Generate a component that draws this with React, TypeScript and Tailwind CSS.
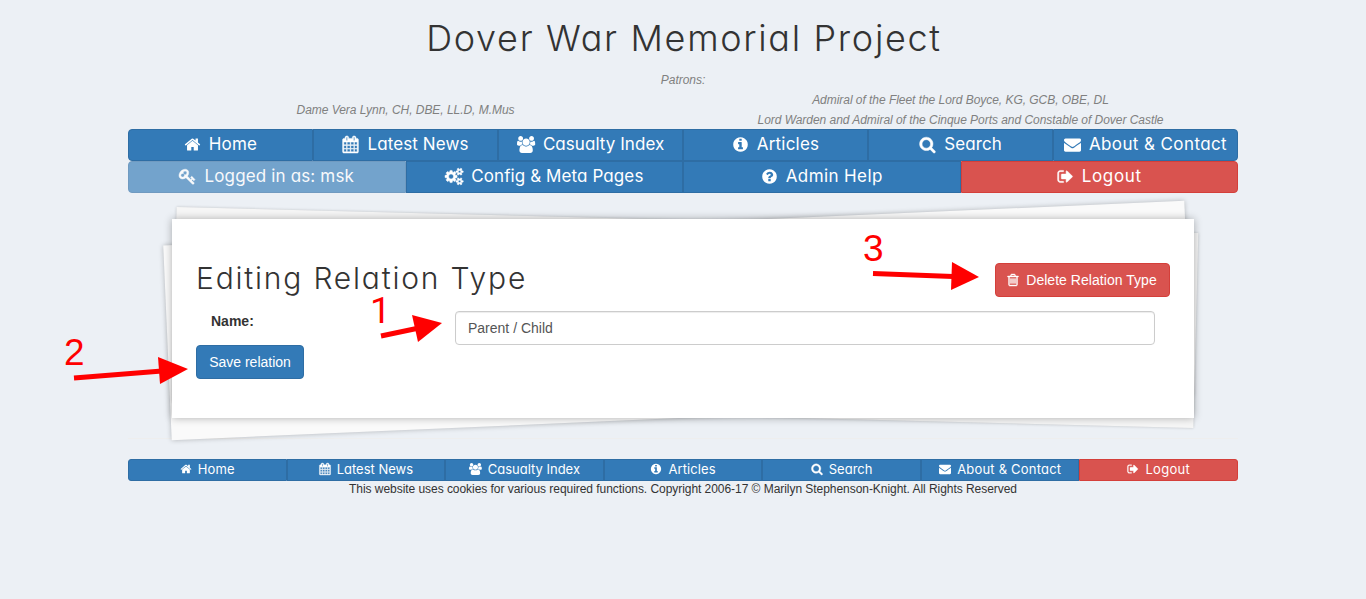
import React from 'react';

const paths = {
  home: 'M1472 992v480q0 26-19 45t-45 19h-384v-384h-256v384h-384q-26 0-45-19t-19-45v-480q0-1 .5-3t.5-3l575-474 575 474q1 2 1 6zm223-69l-62 74q-8 9-21 11h-3q-13 0-21-7l-692-577-692 577q-12 8-24 7-13-2-21-11l-62-74q-8-10-7-23.5t11-21.5l719-599q32-26 76-26t76 26l244 204v-195q0-14 9-23t23-9h192q14 0 23 9t9 23v408l219 182q10 8 11 21.5t-7 23.5z',
  calendar: 'M192 1664h288v-288h-288v288zm352 0h320v-288h-320v288zm-352-352h288v-320h-288v320zm352 0h320v-320h-320v320zm-352-384h288v-288h-288v288zm736 736h320v-288h-320v288zm-384-736h320v-288h-320v288zm768 736h288v-288h-288v288zm-384-352h320v-320h-320v320zm-352-864v-288q0-13-9.5-22.5t-22.5-9.5h-64q-13 0-22.5 9.5t-9.5 22.5v288q0 13 9.5 22.5t22.5 9.5h64q13 0 22.5-9.5t9.5-22.5zm736 864h288v-320h-288v320zm-384-384h320v-288h-320v288zm384 0h288v-288h-288v288zm32-480v-288q0-13-9.5-22.5t-22.5-9.5h-64q-13 0-22.5 9.5t-9.5 22.5v288q0 13 9.5 22.5t22.5 9.5h64q13 0 22.5-9.5t9.5-22.5zm384-64v1280q0 52-38 90t-90 38h-1408q-52 0-90-38t-38-90v-1280q0-52 38-90t90-38h128v-96q0-66 47-113t113-47h64q66 0 113 47t47 113v96h384v-96q0-66 47-113t113-47h64q66 0 113 47t47 113v96h128q52 0 90 38t38 90z',
  users: 'M593 896q-162 5-265 128h-134q-82 0-138-40.5t-56-118.5q0-353 124-353 6 0 43.5 21t97.5 42.5 119 21.5q67 0 133-23-5 37-5 66 0 139 81 256zm1071 637q0 120-73 189.5t-194 69.5h-874q-121 0-194-69.5t-73-189.5q0-53 3.5-103.5t14-109 26.5-108.5 43-97.5 62-81 85.5-53.5 111.5-20q10 0 43 21.5t73 48 107 48 135 21.5 135-21.5 107-48 73-48 43-21.5q61 0 111.5 20t85.5 53.5 62 81 43 97.5 26.5 108.5 14 109 3.5 103.5zm-1024-1277q0 106-75 181t-181 75-181-75-75-181 75-181 181-75 181 75 75 181zm704 384q0 159-112.5 271.5t-271.5 112.5-271.5-112.5-112.5-271.5 112.5-271.5 271.5-112.5 271.5 112.5 112.5 271.5zm576 225q0 78-56 118.5t-138 40.5h-134q-103-123-265-128 81-117 81-256 0-29-5-66 66 23 133 23 59 0 119-21.5t97.5-42.5 43.5-21q124 0 124 353zm-128-609q0 106-75 181t-181 75-181-75-75-181 75-181 181-75 181 75 75 181z',
  info: 'M1152 1376v-160q0-14-9-23t-23-9h-96v-512q0-14-9-23t-23-9h-320q-14 0-23 9t-9 23v160q0 14 9 23t23 9h96v320h-96q-14 0-23 9t-9 23v160q0 14 9 23t23 9h448q14 0 23-9t9-23zm-128-896v-160q0-14-9-23t-23-9h-192q-14 0-23 9t-9 23v160q0 14 9 23t23 9h192q14 0 23-9t9-23zm640 416q0 209-103 385.5t-279.5 279.5-385.5 103-385.5-103-279.5-279.5-103-385.5 103-385.5 279.5-279.5 385.5-103 385.5 103 279.5 279.5 103 385.5z',
  question: 'M1024 1376v-192q0-14-9-23t-23-9h-192q-14 0-23 9t-9 23v192q0 14 9 23t23 9h192q14 0 23-9t9-23zm256-672q0-88-55.5-163t-138.5-116-170-41q-243 0-371 213-15 24 8 42l132 100q7 6 19 6 16 0 25-12 53-68 86-92 34-24 86-24 48 0 85.5 26t37.5 59q0 38-20 61t-68 45q-63 28-115.5 86.5t-52.5 125.5v36q0 14 9 23t23 9h192q14 0 23-9t9-23q0-19 21.5-49.5t54.5-49.5q32-18 49-28.5t46-35 44.5-48 28-60.5 12.5-81zm384 192q0 209-103 385.5t-279.5 279.5-385.5 103-385.5-103-279.5-279.5-103-385.5 103-385.5 279.5-279.5 385.5-103 385.5 103 279.5 279.5 103 385.5z',
  search: 'M1216 832q0-185-131.5-316.5t-316.5-131.5-316.5 131.5-131.5 316.5 131.5 316.5 316.5 131.5 316.5-131.5 131.5-316.5zm512 832q0 52-38 90t-90 38q-54 0-90-38l-343-342q-179 124-399 124-143 0-273.5-55.5t-225-150-150-225-55.5-273.5 55.5-273.5 150-225 225-150 273.5-55.5 273.5 55.5 225 150 150 225 55.5 273.5q0 220-124 399l343 343q37 37 37 90z',
  envelope: 'M1792 710v794q0 66-47 113t-113 47h-1472q-66 0-113-47t-47-113v-794q44 49 101 87 362 246 497 345 57 42 92.5 65.5t94.5 48 110 24.5h2q51 0 110-24.5t94.5-48 92.5-65.5q170-123 498-345 57-39 100-87zm0-294q0 79-49 151t-122 123q-376 261-468 325-10 7-42.5 31t-54 38.5-52 32.5-57.5 27-50 9h-2q-23 0-50-9t-57.5-27-52-32.5-54-38.5-42.5-31q-91-64-262-182.5t-205-142.5q-62-42-117-115.5t-55-136.5q0-78 41.5-130t118.5-52h1472q65 0 112.5 47t47.5 113z',
  signOut: 'M704 1440q0 4 1 20t.5 26.5-3 23.5-10 19.5-20.5 6.5h-320q-119 0-203.5-84.5t-84.5-203.5v-704q0-119 84.5-203.5t203.5-84.5h320q13 0 22.5 9.5t9.5 22.5q0 4 1 20t.5 26.5-3 23.5-10 19.5-20.5 6.5h-320q-66 0-113 47t-47 113v704q0 66 47 113t113 47h312l11.5 1 11.5 3 8 5.5 7 9 2 13.5zm928-544q0 26-19 45l-544 544q-19 19-45 19t-45-19-19-45v-288h-448q-26 0-45-19t-19-45v-384q0-26 19-45t45-19h448v-288q0-26 19-45t45-19 45 19l544 544q19 19 19 45z',
  key: 'M832 512q0-80-56-136t-136-56-136 56-56 136q0 42 19 83-41-19-83-19-80 0-136 56t-56 136 56 136 136 56 136-56 56-136q0-42-19-83 41 19 83 19 80 0 136-56t56-136zm851 704q0 17-49 66t-66 49q-9 0-28.5-16t-36.5-33-38.5-40-24.5-26l-96 96 220 220q28 28 28 68 0 42-39 81t-81 39q-40 0-68-28l-671-671q-176 131-365 131-163 0-265.500-102.500t-102.500-265.500q0-160 95-313t248-248 313-95q163 0 265.500 102.500t102.500 265.500q0 189-131 365l355 355 96-96q-3-3-26-24.500t-40-38.500-33-36.500-16-28.500q0-17 49-66t66-49q13 0 23 10 6 6 46 44.500t82 79.500 86.500 86 73 78 28.500 41z',
  cogs: 'M896 896q0-106-75-181t-181-75-181 75-75 181 75 181 181 75 181-75 75-181zm768 512q0-52-38-90t-90-38-90 38-38 90q0 53 37.5 90.5t90.5 37.5 90.5-37.5 37.5-90.5zm0-1024q0-52-38-90t-90-38-90 38-38 90q0 53 37.5 90.5t90.5 37.5 90.5-37.5 37.5-90.5zm-384 421v185q0 10-7 19.5t-16 10.5l-155 24q-11 35-32 76 34 48 90 115 7 11 7 20 0 12-7 19-23 30-82.5 89.5t-78.5 59.5q-11 0-21-7l-115-90q-37 19-77 31-11 108-23 155-7 24-30 24h-186q-11 0-20-7.5t-10-17.5l-23-153q-34-10-75-31l-118 89q-7 7-20 7-11 0-21-8-144-133-144-160 0-9 7-19 10-14 41-53t47-61q-23-44-35-82l-152-24q-10-1-17-9.5t-7-19.5v-185q0-10 7-19.5t16-10.5l155-24q11-35 32-76-34-48-90-115-7-11-7-20 0-12 7-20 22-30 82-89t79-59q11 0 21 7l115 90q34-18 77-32 11-108 23-154 7-24 30-24h186q11 0 20 7.5t10 17.5l23 153q34 10 75 31l118-89q8-7 20-7 11 0 21 8 144 133 144 160 0 8-7 19-12 16-42 54t-45 60q23 48 34 82l152 23q10 2 17 10.5t7 19.5zm640 533v140q0 16-149 31-12 27-30 52 51 113 51 138 0 4-4 7-122 71-124 71-8 0-46-47t-52-68q-20 2-30 2t-30-2q-14 21-52 68t-46 47q-2 0-124-71-4-3-4-7 0-25 51-138-18-25-30-52-149-15-149-31v-140q0-16 149-31 13-29 30-52-51-113-51-138 0-4 4-7 4-2 35-20t59-34 30-16q8 0 46 46.5t52 67.5q20-2 30-2t30 2q51-71 92-112l6-2q4 0 124 70 4 3 4 7 0 25-51 138 17 23 30 52 149 15 149 31zm0-1024v140q0 16-149 31-12 27-30 52 51 113 51 138 0 4-4 7-122 71-124 71-8 0-46-47t-52-68q-20 2-30 2t-30-2q-14 21-52 68t-46 47q-2 0-124-71-4-3-4-7 0-25 51-138-18-25-30-52-149-15-149-31v-140q0-16 149-31 13-29 30-52-51-113-51-138 0-4 4-7 4-2 35-20t59-34 30-16q8 0 46 46.5t52 67.5q20-2 30-2t30 2q51-71 92-112l6-2q4 0 124 70 4 3 4 7 0 25-51 138 17 23 30 52 149 15 149 31z',
  trash: 'M704 736v576q0 14-9 23t-23 9h-64q-14 0-23-9t-9-23v-576q0-14 9-23t23-9h64q14 0 23 9t9 23zm256 0v576q0 14-9 23t-23 9h-64q-14 0-23-9t-9-23v-576q0-14 9-23t23-9h64q14 0 23 9t9 23zm256 0v576q0 14-9 23t-23 9h-64q-14 0-23-9t-9-23v-576q0-14 9-23t23-9h64q14 0 23 9t9 23zm128 724v-948h-896v948q0 22 7 40.5t14.5 27 10.5 8.5h832q3 0 10.5-8.5t14.5-27 7-40.5zm-672-1076h448l-48-117q-7-9-17-11h-317q-10 2-17 11zm928 32v64q0 14-9 23t-23 9h-96v948q0 83-47 143.5t-113 60.5h-832q-66 0-113-58.5t-47-141.5v-952h-96q-14 0-23-9t-9-23v-64q0-14 9-23t23-9h309l70-167q15-37 54-63t79-26h320q40 0 79 26t54 63l70 167h309q14 0 23 9t9 23z',
};

type IconName = keyof typeof paths;

const bold: IconName[] = ['calendar', 'key', 'search', 'trash', 'signOut', 'cogs'];

function Icon({ name, className }: { name: IconName; className: string }) {
  const wide = name === 'users' || name === 'cogs';
  return (
    <svg
      viewBox={wide ? '0 0 1920 1792' : '0 0 1792 1792'}
      className={`shrink-0 overflow-visible fill-current ${bold.includes(name) ? 'stroke-current' : ''} ${className}`}
      strokeWidth="50"
      aria-hidden="true"
    >
      <path d={paths[name]} />
    </svg>
  );
}

const round = "font-[Inter,'Open_Sans',sans-serif] [font-feature-settings:'cv11'_1]";
const blue = 'bg-[#337ab7] border-[#2e6da4]';
const red = 'bg-[#d9534f] border-[#d43f3a]';

type Item = { icon: IconName; label: string; track: string; tone?: string };

const mainNav: Item[] = [
  { icon: 'home', label: 'Home', track: 'tracking-[0.2px]' },
  { icon: 'calendar', label: 'Latest News', track: 'tracking-[0.1px]' },
  { icon: 'users', label: 'Casualty Index', track: 'tracking-[0.05px]' },
  { icon: 'info', label: 'Articles', track: 'tracking-[0.2px]' },
  { icon: 'search', label: 'Search', track: 'tracking-[0.1px]' },
  { icon: 'envelope', label: 'About & Contact', track: 'tracking-[0.4px]' },
];

const adminNav: Item[] = [
  { icon: 'key', label: 'Logged in as: msk', track: 'tracking-[0.15px]', tone: `${blue} opacity-65` },
  { icon: 'cogs', label: 'Config & Meta Pages', track: 'tracking-[0.1px]' },
  { icon: 'question', label: 'Admin Help', track: 'tracking-[0.4px]' },
  { icon: 'signOut', label: 'Logout', track: 'tracking-[0.65px]', tone: red },
];

const footerNav: Item[] = [
  { icon: 'home', label: 'Home', track: 'tracking-[0.2px]' },
  { icon: 'calendar', label: 'Latest News', track: '' },
  { icon: 'users', label: 'Casualty Index', track: '' },
  { icon: 'info', label: 'Articles', track: 'tracking-[0.1px]' },
  { icon: 'search', label: 'Search', track: '' },
  { icon: 'envelope', label: 'About & Contact', track: 'tracking-[0.2px]' },
  { icon: 'signOut', label: 'Logout', track: 'tracking-[0.3px]', tone: red },
];

function Nav({ items, small }: { items: Item[]; small?: boolean }) {
  return (
    <nav className={`flex ${small ? 'h-[22px]' : 'h-8'}`}>
      {items.map((it) => (
        <a
          key={it.label}
          href="#"
          className={`flex min-w-0 flex-1 items-center justify-center border pb-[2px] whitespace-nowrap text-white ${round} ${small ? 'gap-[6px] text-[13px] first:rounded-l-[3px] last:rounded-r-[3px]' : 'gap-[8px] text-[17px] first:rounded-l-[4px] last:rounded-r-[4px]'} ${it.tone ?? blue}`}
        >
          <Icon name={it.icon} className={small ? 'h-[12px] w-auto' : 'h-[17px] w-auto'} />
          <span className={it.track}>{it.label}</span>
        </a>
      ))}
    </nav>
  );
}

export default function App() {
  return (
    <div className="relative h-[599px] overflow-hidden bg-[#ecf0f5] font-['Liberation_Sans',Arial,sans-serif] text-sm text-[#333]">
      <div className="mx-auto w-[1110px]">
        <header className="h-[129px] pt-[16px] text-center">
          <h1 className={`h-[54px] pl-[2px] text-[36px] leading-[44px] font-light tracking-[1.68px] ${round}`}>Dover War Memorial Project</h1>
          <div className="text-[12px] leading-5 tracking-[-0.04px] text-[#808080] italic">
            <p>Patrons:</p>
            <div className="flex items-center">
              <p className="w-1/2">Dame Vera Lynn, CH, DBE, LL.D, M.Mus</p>
              <p className="w-1/2">
                Admiral of the Fleet the Lord Boyce, KG, GCB, OBE, DL
                <br />
                Lord Warden and Admiral of the Cinque Ports and Constable of Dover Castle
              </p>
            </div>
          </div>
        </header>
        <Nav items={mainNav} />
        <Nav items={adminNav} />
        <div className="mt-[26px] h-[220px] border-b border-[#eee] px-[44px]">
          <main className="relative h-[199px] w-[1022px]">
            <div className="absolute top-[4px] left-[-5px] h-[195px] w-full rotate-[-2.5deg] bg-[#fafafa] shadow-[0_0_5px_rgba(0,0,0,0.25)]" />
            <div className="absolute top-[1px] left-[2px] h-[195px] w-full rotate-[1.46deg] bg-[#f6f6f6] shadow-[0_0_3px_rgba(0,0,0,0.2)]" />
            <div className="relative h-full bg-white px-[24px] pt-[44px] shadow-[0_0_8px_rgba(0,0,0,0.3)]">
              <div className="flex h-[48px] justify-between">
                <h2 className={`h-[30px] text-[30px] leading-[30px] font-light tracking-[1.8px] ${round}`}>Editing Relation Type</h2>
                <button className={`flex h-[34px] w-[175px] items-center justify-center gap-[6px] rounded-[4px] border pr-[2px] text-white ${red}`}>
                  <Icon name="trash" className="size-[14px]" />
                  <span className="tracking-[0.04px]">Delete Relation Type</span>
                </button>
              </div>
              <div className="flex h-[34px] pr-[15px] pl-[15px]">
                <label htmlFor="name" className="w-[244px] leading-5 font-bold">Name:</label>
                <input id="name" defaultValue="Parent / Child" className="h-[34px] flex-1 rounded-[4px] border border-[#ccc] bg-white px-3 text-[#555] shadow-[inset_0_1px_1px_rgba(0,0,0,0.075)]" />
              </div>
              <button className={`block h-[34px] w-[108px] rounded-[4px] border text-white ${blue}`}>Save relation</button>
            </div>
          </main>
        </div>
        <footer className="mt-[20px]">
          <Nav items={footerNav} small />
          <p className="text-center text-[12px] leading-[17px] tracking-[-0.048px]">
            This website uses cookies for various required functions. Copyright 2006-17 © Marilyn Stephenson-Knight. All Rights Reserved
          </p>
        </footer>
      </div>
      <svg className="pointer-events-none absolute inset-0 h-[599px] w-[1366px] fill-[#f00] stroke-[#f00]" viewBox="0 0 1366 599">
        <path stroke="none" d="M412 315l30 8-24 19z" />
        <path strokeWidth="5" d="M381 336l38-8" />
        <path stroke="none" d="M158 357l30 12-28 15z" />
        <path strokeWidth="5" d="M74 378l88-7" />
        <path stroke="none" d="M952 262l27 15-28 13z" />
        <path strokeWidth="5" d="M873 273.500l80 3" />
      </svg>
      <span className="absolute top-[297px] left-[370px] font-[Roboto,sans-serif] text-[37px] leading-[28px] text-[#f00]">1</span>
      <span className="absolute top-[333px] left-[64px] text-[37px] leading-[40px] text-[#f00]">2</span>
      <span className="absolute top-[229px] left-[863px] text-[37px] leading-[40px] text-[#f00]">3</span>
    </div>
  );
}
